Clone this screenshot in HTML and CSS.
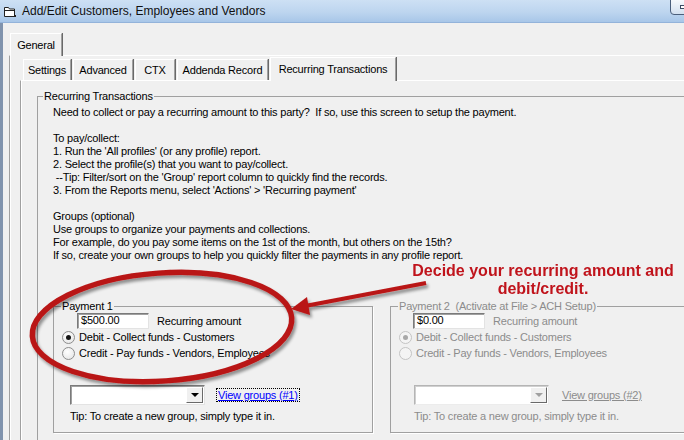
FILE: index.html
```html
<!DOCTYPE html>
<html>
    <head>
        <meta charset="UTF-8">
        <title>Add/Edit Customers, Employees and Vendors</title>
        <link rel="stylesheet" href="styles.css">
    </head>
    <body>
        <div class="win">

            <div class="titlebar">
                <svg class="appicon" width="14" height="12" viewBox="0 0 14 12">
                    <path d="M1.5 1.5h4l1 1.5h5v7.5h-10z" fill="#fff" stroke="#222" stroke-width="1"/>
                    <path d="M1.5 4.5h10" stroke="#222" stroke-width="1"/>
                    <rect x="11" y="9" width="2" height="2" fill="#222"/>
                </svg>
                <span class="title">Add/Edit Customers, Employees and Vendors</span>
                <span class="minbtn"><i></i></span>
            </div>

            <div class="client">
                <div class="tabs outer">
                    <div class="tab sel">General</div>
                </div>
                <div class="page outerpage">
                    <div class="innerwrap">
                        <div class="tabs inner">
                            <div class="tab t1">Settings</div>
                            <div class="tab t2">Advanced</div>
                            <div class="tab t3">CTX</div>
                            <div class="tab t4">Addenda Record</div>
                            <div class="tab sel t5">Recurring Transactions</div>
                        </div>
                        <div class="page innerpage">
                            <fieldset class="group main">
                                <legend>Recurring Transactions</legend>
                                <div class="info">
                                    <p>Need to collect or pay a recurring amount to this party?&nbsp; If so, use this screen to setup the payment.</p>
                                    <p>To pay/collect:<br>
                                    1. Run the 'All profiles' (or any profile) report.<br>
                                    2. Select the profile(s) that you want to pay/collect.<br>
                                    &nbsp;--Tip: Filter/sort on the 'Group' report column to quickly find the records.<br>
                                    3. From the Reports menu, select 'Actions' &gt; 'Recurring payment'</p>
                                    <p>Groups (optional)<br>
                                    Use groups to organize your payments and collections.<br>
                                    For example, do you pay some items on the 1st of the month, but others on the 15th?<br>
                                    If so, create your own groups to help you quickly filter the payments in any profile report.</p>
                                </div>

                                <div class="payments">
                                    <fieldset class="group pay p1">
                                        <legend>Payment 1</legend>
                                        <div class="amount"><span class="textbox">$500.00</span><span>Recurring amount</span></div>
                                        <div class="opt"><span class="radio on"></span>Debit - Collect funds - Customers</div>
                                        <div class="opt"><span class="radio"></span>Credit - Pay funds - Vendors, Employees</div>
                                        <div class="grp">
                                            <div class="combo"><span class="drop"><i></i></span></div>
                                            <a class="link focus">View groups (#1)</a>
                                        </div>
                                        <p class="tip">Tip: To create a new group, simply type it in.</p>
                                    </fieldset>
                                    <fieldset class="group pay p2 off">
                                        <legend>Payment 2&nbsp; (Activate at File &gt; ACH Setup)</legend>
                                        <div class="amount"><span class="textbox">$0.00</span><span>Recurring amount</span></div>
                                        <div class="opt"><span class="radio on"></span>Debit - Collect funds - Customers</div>
                                        <div class="opt"><span class="radio"></span>Credit - Pay funds - Vendors, Employees</div>
                                        <div class="grp">
                                            <div class="combo"><span class="drop"><i></i></span></div>
                                            <a class="link">View groups (#2)</a>
                                        </div>
                                        <p class="tip">Tip: To create a new group, simply type it in.</p>
                                    </fieldset>
                                </div>
                            </fieldset>
                        </div>
                    </div>
                </div>
            </div>

            <!-- annotation drawn over the screenshot -->
            <svg class="marks" width="684" height="440" viewBox="0 0 684 440">
                <defs>
                    <filter id="shade" x="-20%" y="-20%" width="140%" height="140%">
                        <feDropShadow dx="2" dy="3" stdDeviation="1.6" flood-color="#000" flood-opacity="0.4"/>
                    </filter>
                </defs>
                <g filter="url(#shade)">
                    <ellipse cx="162" cy="327" rx="130" ry="54" transform="rotate(-4 162 327)" fill="none" stroke="#b91515" stroke-width="5.5"/>
                    <line x1="426" y1="283" x2="305" y2="306" stroke="#b91515" stroke-width="4"/>
                    <polygon points="291,309 307,297 310,315" fill="#b91515"/>
                </g>
            </svg>
            <div class="callout">Decide your recurring amount and<br>debit/credit.</div>

        </div>
    </body>
</html>
```

FILE: styles.css
```css
*{
    box-sizing: border-box;
}
body{
    margin: 0;
    background: #f0f0f0;
    font-family: "Liberation Sans", Arial, sans-serif;
    font-size: 11px;
    letter-spacing: -0.2px;
    color: #000;
    overflow: hidden;
}
.win{
    position: relative;
    width: 684px;
    height: 440px;
    overflow: hidden;
    background: #f0f0f0;
}

/* title bar */
.titlebar{
    height: 23px;
    display: flex;
    align-items: center;
    background: linear-gradient(#cde0f4, #bdd5ef 55%, #a8c6e8);
    border-bottom: 1px solid #93b3da;
}
.appicon{
    margin: 1px 5px 0 3px;
    flex-shrink: 0;
}
.title{
    font-size: 12px;
    letter-spacing: 0;
    color: #101010;
    white-space: nowrap;
}
.minbtn{
    align-self: flex-start;
    margin: -1px -20px 0 auto;
    width: 34px;
    height: 16px;
    border: 1px solid #4b5f7b;
    border-radius: 0 0 4px 4px;
    background: linear-gradient(#f6f9fc, #d3e0ef);
    padding: 5px 0 0 9px;
}
.minbtn i{
    display: block;
    width: 12px;
    height: 4px;
    background: #fff;
    border: 1px solid #3c4c63;
}

/* window client + tab controls */
.client{
    height: 417px;
    border-left: 3px solid #8093ad;
    padding: 10px 0 0 6px;
}
.tabs{
    display: flex;
    align-items: flex-end;
}
.tabs.outer{
    padding-left: 1px;
}
.tab{
    height: 21px;
    line-height: 20px;
    text-align: center;
    white-space: nowrap;
    border-top: 1px solid #fff;
    border-left: 1px solid #fff;
    border-right: 1px solid #a0a0a0;
    box-shadow: 1px 0 0 #696969;
    margin-right: 2px;
    background: #f0f0f0;
}
.tab.sel{
    position: relative;
    z-index: 1;
    height: 24px;
    line-height: 22px;
    margin-bottom: -1px;
}
.outer .tab.sel{
    width: 52px;
    height: 23px;
}
.t1{ width: 48px; }
.t2{ width: 60px; }
.t3{ width: 40px; }
.t4{ width: 91px; }
.t5{ width: 126px; }

.page{
    border-top: 1px solid #fff;
    border-left: 1px solid #a0a0a0;
    box-shadow: inset 1px 0 0 #fff;
}
.outerpage{
    width: 720px;
    height: 400px;
}
.innerwrap{
    margin-left: 10px;
}
.tabs.inner{
    padding-left: 3px;
    height: 24px;
}
.innerpage{
    width: 720px;
    height: 380px;
    padding-top: 9px;
}

/* group boxes */
.group{
    border: 1px solid #a0a0a0;
    box-shadow: 1px 1px 0 #fff;
    margin: 0;
    min-width: 0;
}
.group legend{
    line-height: 13px;
    padding: 0 1px;
}
.main{
    width: 700px;
    margin-left: 16px;
    padding: 0 0 20px 15px;
}
.main > legend{
    margin-left: -10px;
}
.info{
    margin-top: 3px;
    line-height: 13px;
}
.info p{
    margin: 0 0 13px;
    white-space: nowrap;
}
.info p:last-child{
    margin: 0;
}

.payments{
    display: flex;
    gap: 17px;
    margin-top: 38px;
}
.pay{
    width: 320px;
    flex-shrink: 0;
    padding: 0 0 9px 8px;
}
.pay legend{
    margin-left: -1px;
}
.amount{
    display: flex;
    align-items: center;
    height: 16px;
}
.textbox{
    width: 72px;
    height: 16px;
    margin: 0 8px 0 15px;
    padding: 0 0 0 3px;
    line-height: 13px;
    background: #fff;
    border: 1px solid;
    border-color: #7a7a7a #e3e3e3 #e3e3e3 #7a7a7a;
    box-shadow: inset 1px 1px 0 #a0a0a0;
}
.opt{
    display: flex;
    align-items: center;
    height: 16px;
    white-space: nowrap;
}
.radio{
    width: 13px;
    height: 13px;
    margin-right: 4px;
    border-radius: 50%;
    border: 1px solid #8d8d8d;
    background: radial-gradient(circle at 40% 35%, #fff, #e2e2e2);
    display: flex;
    align-items: center;
    justify-content: center;
}
.radio.on:after{
    content: "";
    width: 5px;
    height: 5px;
    border-radius: 50%;
    background: #151515;
}
.grp{
    display: flex;
    align-items: center;
    margin: 24px 0 0 8px;
}
.combo{
    width: 135px;
    height: 20px;
    display: flex;
    justify-content: flex-end;
    padding: 1px;
    background: #fff;
    border: 1px solid;
    border-color: #7a7a7a #e3e3e3 #e3e3e3 #7a7a7a;
    box-shadow: inset 1px 1px 0 #a0a0a0;
}
.drop{
    width: 17px;
    height: 100%;
    background: #f0f0f0;
    border: 1px solid;
    border-color: #fff #696969 #696969 #fff;
    display: flex;
    align-items: center;
    justify-content: center;
}
.drop i{
    width: 0;
    height: 0;
    border-left: 4px solid transparent;
    border-right: 4px solid transparent;
    border-top: 4px solid #000;
}
.link{
    margin-left: 12px;
    padding: 0 1px;
    color: #0000ff;
    text-decoration: underline;
    white-space: nowrap;
}
.link.focus{
    outline: 1px dotted #000;
}
.tip{
    margin: 5px 0 0 8px;
    line-height: 13px;
    white-space: nowrap;
}

/* disabled second payment */
.p2 .amount .textbox{
    margin-left: 14px;
}
.p2 .grp{
    margin-left: 15px;
}
.p2 .tip{
    margin-left: 15px;
}
.off,
.off .link{
    color: #8c8c8c;
}
.off .textbox{
    color: #000;
}
.off .radio{
    border-color: #c4c4c4;
    background: #f4f4f4;
}
.off .radio.on:after{
    background: #a8a8a8;
}
.off .combo{
    border-color: #b5b5b5 #ececec #ececec #b5b5b5;
    box-shadow: inset 1px 1px 0 #d0d0d0;
}
.off .drop i{
    border-top-color: #a0a0a0;
}

/* red annotation */
.marks{
    position: absolute;
    left: 0;
    top: 0;
    pointer-events: none;
}
.callout{
    position: absolute;
    left: 403px;
    top: 262px;
    width: 280px;
    text-align: center;
    font-size: 16px;
    font-weight: bold;
    line-height: 18px;
    letter-spacing: 0;
    color: #c0141c;
}
```
